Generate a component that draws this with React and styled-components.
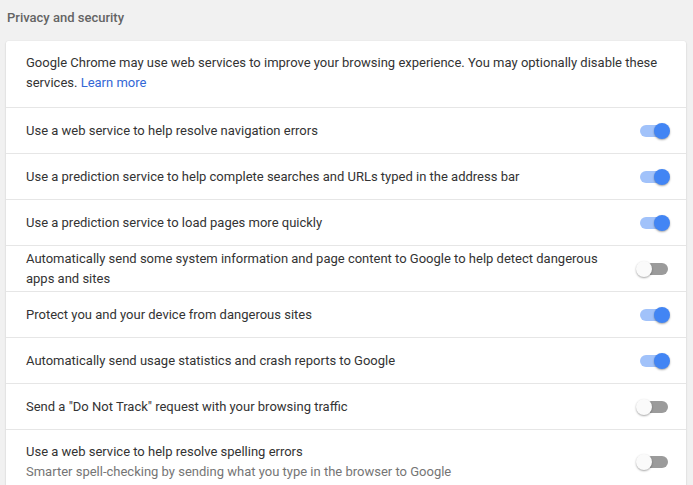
import React from 'react'
import { styled, createGlobalStyle } from 'styled-components'

const GlobalStyle = createGlobalStyle`
    body {
        margin: 0;
        background: #f1f1f1;
        font-family: Roboto, "Noto Sans", sans-serif;
    }
`
const Page = styled.div`
    padding: 8px 7px 0 6px;
    width: 680px;
`
const Heading = styled.h2`
    margin: 0 0 13px 1px;
    font-size: 13px;
    line-height: 20px;
    font-weight: 500;
    color: #646464;
`
const Card = styled.div`
    background: #fff;
    border-radius: 2px;
    box-shadow: 0 1px 2px rgba(0,0,0,0.16), 0 0 1px rgba(0,0,0,0.12);
`
const Intro = styled.div`
    padding: 12px 20px 14px;
    font-size: 13px;
    line-height: 20px;
    color: #333;
`
const Link = styled.a`
    color: #3367d6;
    text-decoration: none;
`
const Row = styled.div`
    display: flex;
    align-items: center;
    min-height: 46px;
    padding: ${p => (p.$padded ? '12px 16px 10px 20px' : '0 16px 0 20px')};
    box-sizing: border-box;
    border-top: 1px solid #e6e6e6;
`
const Label = styled.div`
    flex: 1;
    padding-right: 30px;
    font-size: 13px;
    line-height: 20px;
    color: #333;
`
const Sub = styled.div`
    color: #757575;
`
const Track = styled.div`
    position: relative;
    width: 28px;
    height: 12px;
    margin-right: 2px;
    border-radius: 6px;
    background: ${p => (p.$on ? '#a1c2fa' : '#9b9b9b')};
    flex-shrink: 0;
`
const Knob = styled.div`
    position: absolute;
    top: -2px;
    left: ${p => (p.$on ? '14px' : '-4px')};
    width: 16px;
    height: 16px;
    border-radius: 50%;
    background: ${p => (p.$on ? '#4285f4' : '#fafafa')};
    box-shadow: 0 1px 2px rgba(0,0,0,0.35);
`

const Toggle = ({ on }) => (
  <Track $on={on}>
    <Knob $on={on} />
  </Track>
)

const rows = [
  { text: 'Use a web service to help resolve navigation errors', on: true },
  { text: 'Use a prediction service to help complete searches and URLs typed in the address bar', on: true },
  { text: 'Use a prediction service to load pages more quickly', on: true },
  { text: 'Automatically send some system information and page content to Google to help detect dangerous apps and sites', on: false },
  { text: 'Protect you and your device from dangerous sites', on: true },
  { text: 'Automatically send usage statistics and crash reports to Google', on: true },
  { text: 'Send a "Do Not Track" request with your browsing traffic', on: false },
  {
    text: 'Use a web service to help resolve spelling errors',
    sub: 'Smarter spell-checking by sending what you type in the browser to Google',
    on: false,
  },
]

const App = () => {
  return (
    <Page>
      <GlobalStyle />
      <Heading>Privacy and security</Heading>
      <Card>
        <Intro>
          Google Chrome may use web services to improve your browsing experience. You may optionally disable these
          services. <Link href="#">Learn more</Link>
        </Intro>
        {rows.map(r => (
          <Row key={r.text} $padded={!!r.sub}>
            <Label>
              {r.text}
              {r.sub && <Sub>{r.sub}</Sub>}
            </Label>
            <Toggle on={r.on} />
          </Row>
        ))}
      </Card>
    </Page>
  )
}

export default App
